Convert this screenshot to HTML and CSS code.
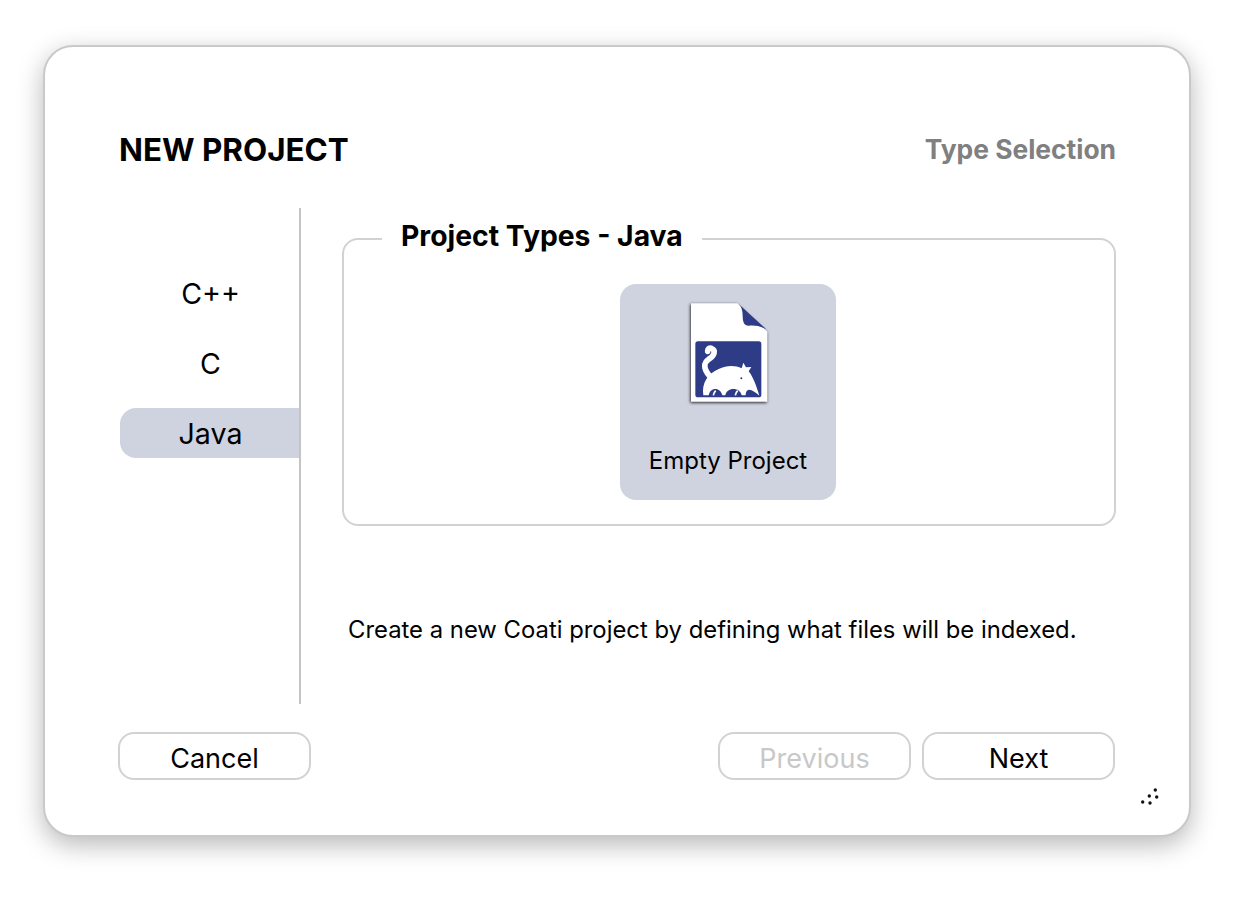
FILE: index.html
```html
<!DOCTYPE html>
<html lang="en">
<head>
    <meta charset="utf-8">
    <title>New Project</title>
    <link rel="stylesheet" href="styles.css">
</head>
<body>
    <div class="window">
        <header class="header">
            <h1 class="title">NEW PROJECT</h1>
            <span class="step">Type Selection</span>
        </header>
        <div class="content">
            <nav class="languages">
                <div class="language">C++</div>
                <div class="language">C</div>
                <div class="language selected">Java</div>
            </nav>
            <main class="details">
                <fieldset class="types">
                    <legend class="types-title"><span class="types-text">Project Types - Java</span></legend>
                    <div class="tile">
                        <svg class="file-icon" viewBox="0 0 285 345" width="95" height="115">
                            <path class="file-page" d="M33 25H172L262 110V320H33Z"/>
                            <path class="file-blue" d="M176 27L259 103C240 92 222 90 206 92C192 92 188 80 188 62C188 46 184 34 176 27Z"/>
                            <rect class="file-blue" x="46" y="139" width="198" height="168" rx="8"/>
                            <path class="tail" d="M88 242C70 220 70 204 87 192C103 182 109 166 94 160C85 158 83 163 83 169"/>
                            <path class="body" d="M70 301C64 264 84 236 116 222C140 210 166 210 185 220L190 203L198 217L214 216L206 229C220 246 230 276 238 302C228 292 218 285 206 284C199 286 197 293 197 301H185C182 288 172 282 160 282C148 282 138 289 136 301H127C124 289 116 282 106 282C96 282 88 289 86 301Z"/>
                            <path class="leg" d="M100 301C101 295 103 291 107 287M166 301C167 295 169 291 173 287"/>
                            <circle class="file-blue" cx="184" cy="250" r="3"/>
                        </svg>
                        <span class="tile-label">Empty Project</span>
                    </div>
                </fieldset>
                <p class="description">Create a new Coati project by defining what files will be indexed.</p>
            </main>
        </div>
        <footer class="footer">
            <button class="button">Cancel</button>
            <div class="nav-buttons">
                <button class="button" disabled>Previous</button>
                <button class="button">Next</button>
            </div>
        </footer>
        <svg class="grip" viewBox="0 0 20 20" width="20" height="20">
            <circle cx="1.7" cy="15" r="1.7"/>
            <circle cx="9" cy="16" r="1.7"/>
            <circle cx="8.3" cy="9" r="1.7"/>
            <circle cx="15.7" cy="10" r="1.7"/>
            <circle cx="14.3" cy="3" r="1.7"/>
        </svg>
    </div>
</body>
</html>
```

FILE: styles.css
```css
* {
    box-sizing: border-box;
}
body {
    margin: 0;
    height: 898px;
    padding: 45px 43px 0 43px;
    background-color: white;
    font-family: Inter, "Liberation Sans", sans-serif;
    color: black;
    overflow: hidden;
}
.window {
    position: relative;
    width: 1148px;
    height: 792px;
    padding: 81px 73px 0 74px;
    background-color: white;
    border: 2px solid #c9c9c9;
    border-radius: 30px;
    box-shadow: 0 8px 26px rgba(0, 0, 0, 0.28);
}
.header {
    display: flex;
    justify-content: space-between;
    align-items: center;
    height: 44px;
}
.title {
    margin: 0;
    font-size: 31.4px;
    font-weight: 700;
}
.step {
    padding-bottom: 2px;
    font-size: 26.4px;
    font-weight: 700;
    color: #808080;
}
.content {
    display: flex;
    height: 496px;
    margin-top: 36px;
}
.languages {
    display: flex;
    flex-direction: column;
    gap: 20px;
    width: 181px;
    margin-left: 1px;
    padding-top: 60px;
    border-right: 2px solid #c4c4c4;
}
.language {
    height: 50px;
    padding-left: 2px;
    line-height: 52px;
    text-align: center;
    font-size: 28.6px;
}
.selected {
    background-color: #cfd2df;
    border-radius: 16px 0 0 16px;
}
.details {
    flex: 1;
    padding-left: 41px;
}
.types {
    height: 304px;
    margin: 0;
    padding: 28px 2px 0 0;
    border: 2px solid #d2d2d2;
    border-radius: 16px;
    position: relative;
    top: 14px;
}
.types-title {
    margin-left: 38px;
    padding: 0 19px;
    font-size: 28.3px;
    font-weight: 700;
}
.types-text {
    position: relative;
    top: -3px;
}
.tile {
    display: flex;
    flex-direction: column;
    align-items: center;
    width: 216px;
    height: 216px;
    margin: 0 auto;
    padding-top: 11px;
    background-color: #cfd2df;
    border-radius: 16px;
}
.file-icon {
    display: block;
    margin-left: -1px;
}
.file-page {
    fill: white;
    filter: drop-shadow(-2px 3px 5px rgba(0, 0, 0, 0.85));
}
.file-blue {
    fill: #2e3b86;
}
.tail {
    fill: none;
    stroke: white;
    stroke-width: 17;
    stroke-linecap: round;
}
.body {
    fill: white;
}
.leg {
    fill: none;
    stroke: white;
    stroke-width: 5;
}
.tile-label {
    margin-top: 36px;
    font-size: 24px;
}
.description {
    margin: 0;
    padding-left: 6px;
    position: relative;
    top: 103px;
    font-size: 23.85px;
}
.footer {
    display: flex;
    justify-content: space-between;
    margin: 28px 1px 0 -1px;
}
.nav-buttons {
    display: flex;
    gap: 11px;
}
.button {
    width: 193px;
    height: 48px;
    padding: 4px 0 0 0;
    background-color: white;
    border: 2px solid #d2d2d2;
    border-radius: 16px;
    font-family: inherit;
    font-size: 27px;
    color: black;
}
.button:disabled {
    color: #c8c8c8;
}
.grip {
    position: absolute;
    right: 28px;
    bottom: 28px;
    fill: #111;
}
```
